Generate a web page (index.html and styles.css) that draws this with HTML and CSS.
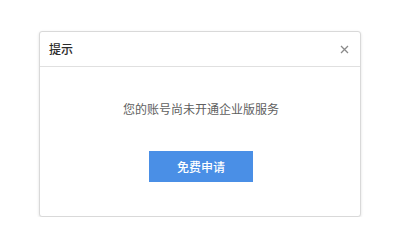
FILE: index.html
```html
<!DOCTYPE html>
<html lang="zh-CN">
<head>
<meta charset="utf-8">
<link rel="stylesheet" href="styles.css">
</head>
<body>
<div class="dialog">
  <div class="dialog-header">
    <span class="dialog-title">提示</span>
    <span class="dialog-close" aria-label="关闭">
      <svg width="9" height="9" viewBox="0 0 9 9"><path d="M1 1L8 8M8 1L1 8" stroke="#8a8a8a" stroke-width="1.3" fill="none"/></svg>
    </span>
  </div>
  <div class="dialog-body">
    <p class="dialog-msg">您的账号尚未开通企业版服务</p>
    <button class="btn-primary">免费申请</button>
  </div>
</div>
</body>
</html>
```
FILE: styles.css
```css
html, body {
  margin: 0;
  padding: 0;
  background: #fff;
}
body {
  padding: 31px 0 0 39px;
  font-family: "Noto Sans CJK SC", "Microsoft YaHei", sans-serif;
}
.dialog {
  width: 320px;
  height: 184px;
  border: 1px solid #d9d9d9;
  border-radius: 3px;
  box-shadow: 0 1px 3px rgba(0,0,0,0.12);
  background: #fff;
  display: flex;
  flex-direction: column;
}
.dialog-header {
  height: 34px;
  border-bottom: 1px solid #e0e0e0;
  display: flex;
  align-items: center;
  justify-content: space-between;
  padding: 0 11px 0 9px;
}
.dialog-title {
  font-size: 12px;
  font-weight: 500;
  color: #2b2b2b;
  line-height: 18px;
}
.dialog-close {
  display: flex;
  width: 9px;
  height: 9px;
}
.dialog-body {
  display: flex;
  flex-direction: column;
  align-items: center;
  padding: 33px 0 0 2px;
}
.dialog-msg {
  margin: 0;
  font-size: 12px;
  line-height: 18px;
  color: #606060;
}
.btn-primary {
  margin-top: 33px;
  width: 104px;
  height: 31px;
  border: none;
  border-radius: 0;
  background: #4a8fe6;
  color: #fff;
  font-family: inherit;
  font-size: 12px;
  font-weight: 500;
  padding: 0;
  cursor: pointer;
}
```
